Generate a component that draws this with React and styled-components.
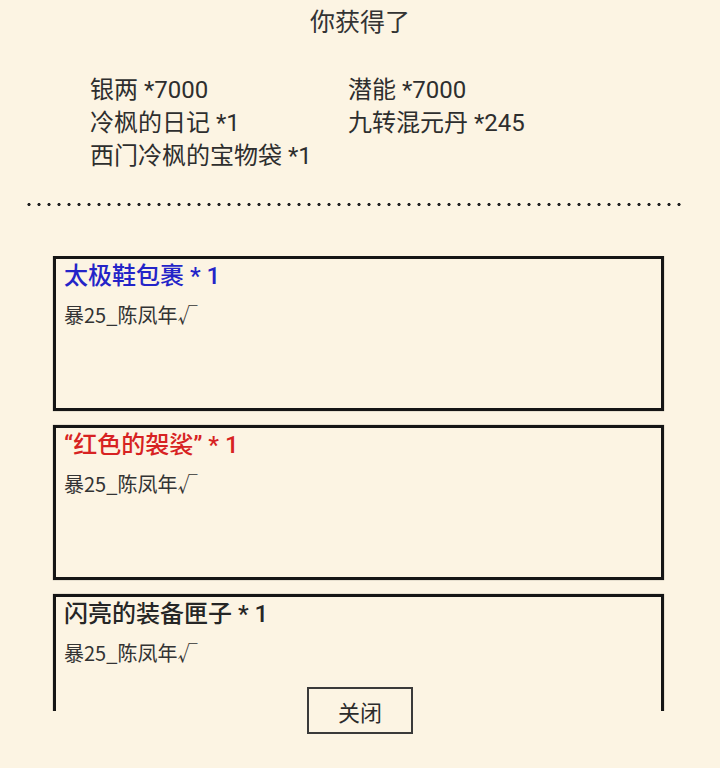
import React from "react";
import styled, { createGlobalStyle } from "styled-components";

const GlobalStyle = createGlobalStyle`
  html, body {
    margin: 0;
    padding: 0;
    background: #fcf4e3;
  }
  body {
    font-family: Roboto, "Noto Sans CJK SC", sans-serif;
    color: #2b2b2b;
  }
`;

const Page = styled.div`
  position: relative;
  width: 720px;
  height: 768px;
  overflow: hidden;
  background: #fcf4e3;
`;

const Heading = styled.h1`
  margin: 0;
  padding-top: 8px;
  font-size: 25px;
  font-weight: 400;
  line-height: 30px;
  text-align: center;
  color: #333;
`;

const RewardGrid = styled.div`
  display: grid;
  grid-template-columns: 258px auto;
  grid-auto-rows: 33px;
  align-items: center;
  margin-top: 33px;
  padding-left: 90px;
  font-size: 24px;
  color: #2e2e2e;
`;

const Reward = styled.span`
  white-space: nowrap;
`;

const Divider = styled.div`
  margin: 32px 36px 0 24px;
  height: 5px;
  background-image: radial-gradient(circle, #222 1.3px, transparent 1.9px);
  background-size: 10px 5px;
  background-repeat: repeat-x;
`;

const CardList = styled.div`
  display: flex;
  flex-direction: column;
  gap: 14px;
  height: 455px;
  margin-top: 49px;
  padding: 0 56px 0 53px;
  overflow: hidden;
`;

const Card = styled.div`
  flex: 0 0 155px;
  box-sizing: border-box;
  padding: 2px 8px 0;
  border: 3px solid #151515;
  box-shadow: 0 0 1px rgba(0, 0, 0, 0.5);
`;

const CardTitle = styled.div`
  font-size: 24px;
  font-weight: 500;
  line-height: 30px;
  color: ${(p) => p.$color};
  white-space: nowrap;
`;

const CardNote = styled.div`
  margin-top: 10px;
  font-family: "Noto Sans CJK SC", sans-serif;
  font-size: 20px;
  line-height: 28px;
  color: #333;
`;

const CloseButton = styled.button`
  position: absolute;
  left: 307px;
  bottom: 34px;
  width: 106px;
  height: 47px;
  box-sizing: border-box;
  border: 2px solid #3a3a3a;
  background: #fcf4e3;
  font-family: "Noto Sans CJK SC", sans-serif;
  font-size: 22px;
  color: #2b2b2b;
  cursor: pointer;
`;

const rewards = [
  "银两 *7000",
  "潜能 *7000",
  "冷枫的日记 *1",
  "九转混元丹 *245",
  "西门冷枫的宝物袋 *1",
];

const items = [
  { name: "太极鞋包裹 * 1", color: "#2424c8" },
  { name: "“红色的袈裟” * 1", color: "#d72222" },
  { name: "闪亮的装备匣子 * 1", color: "#262626" },
];

export default function App() {
  return (
    <Page>
      <GlobalStyle />
      <Heading>你获得了</Heading>
      <RewardGrid>
        {rewards.map((r) => (
          <Reward key={r}>{r}</Reward>
        ))}
      </RewardGrid>
      <Divider />
      <CardList>
        {items.map((it) => (
          <Card key={it.name}>
            <CardTitle $color={it.color}>{it.name}</CardTitle>
            <CardNote>暴25_陈凤年√</CardNote>
          </Card>
        ))}
      </CardList>
      <CloseButton>关闭</CloseButton>
    </Page>
  );
}
